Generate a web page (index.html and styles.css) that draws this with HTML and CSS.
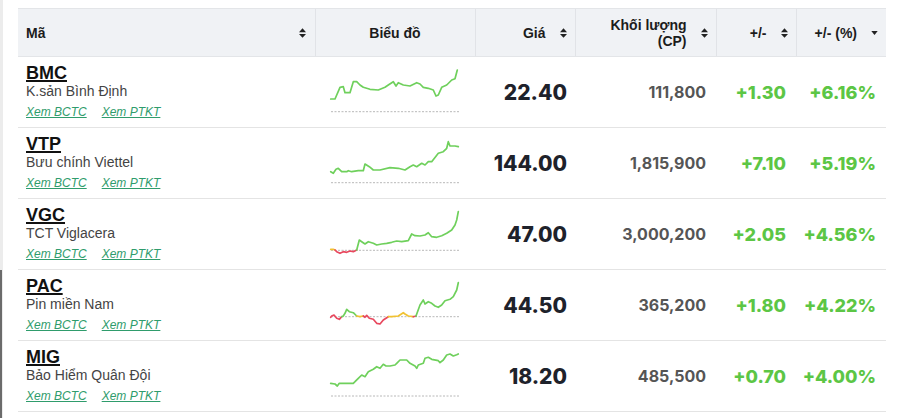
FILE: index.html
```html
<!DOCTYPE html>
<html lang="vi">
<head>
    <meta charset="UTF-8">
    <meta name="viewport" content="width=device-width, initial-scale=1.0">
    <title>Cổ phiếu tăng giá</title>
    <link rel="stylesheet" href="styles.css">
</head>
<body>
    <div class="edge"></div>
    <table class="stocks">
        <colgroup>
            <col class="c-code">
            <col class="c-chart">
            <col class="c-price">
            <col class="c-vol">
            <col class="c-chg">
            <col class="c-pct">
        </colgroup>
        <thead>
            <tr>
                <th><div class="th-in between">Mã <svg class="sort" viewBox="0 0 8 11"><path d="M0 4.5L4 0L8 4.5Z M0 6.5L4 11L8 6.5Z"/></svg></div></th>
                <th><div class="th-in center">Biểu đồ</div></th>
                <th><div class="th-in end">Giá <svg class="sort" viewBox="0 0 8 11"><path d="M0 4.5L4 0L8 4.5Z M0 6.5L4 11L8 6.5Z"/></svg></div></th>
                <th><div class="th-in end"><span class="two">Khối lượng<br>(CP)</span> <svg class="sort" viewBox="0 0 8 11"><path d="M0 4.5L4 0L8 4.5Z M0 6.5L4 11L8 6.5Z"/></svg></div></th>
                <th><div class="th-in end">+/- <svg class="sort" viewBox="0 0 8 11"><path d="M0 4.5L4 0L8 4.5Z M0 6.5L4 11L8 6.5Z"/></svg></div></th>
                <th><div class="th-in end">+/- (%) <svg class="caret" viewBox="0 0 8 5"><path d="M0 0L8 0L4 5Z"/></svg></div></th>
            </tr>
        </thead>
        <tbody>
            <tr>
                <td class="code">
                    <a class="ticker" href="#">BMC</a>
                    <div class="name">K.sản Bình Định</div>
                    <div class="links"><a href="#">Xem BCTC</a><a href="#">Xem PTKT</a></div>
                </td>
                <td class="chart">
                    <svg class="spark" viewBox="0 0 134 48">
                        <line class="base" x1="3" y1="45.7" x2="132" y2="45.7"/>
                        <polyline class="up" points="2.7,33 7,33 12,21.3 15.3,20.7 17,26.7 22,26.7 25.3,15.7 28.7,15.7 32,19 35.3,21.3 42,23.3 50.3,24 57,21.3 60.3,19 65.3,15.7 68,20 70.3,16.7 75.3,19 82,20 88.7,16.7 92,18 95.3,21.3 100.3,22.3 105.3,24 108,30 110.3,29 113.7,21.3 118.7,19 123.7,14 127,12.7 129.3,4"/>
                    </svg>
                </td>
                <td class="price">22.40</td>
                <td class="vol">111,800</td>
                <td class="chg">+1.30</td>
                <td class="chg">+6.16%</td>
            </tr>
            <tr>
                <td class="code">
                    <a class="ticker" href="#">VTP</a>
                    <div class="name">Bưu chính Viettel</div>
                    <div class="links"><a href="#">Xem BCTC</a><a href="#">Xem PTKT</a></div>
                </td>
                <td class="chart">
                    <svg class="spark" viewBox="0 0 134 48">
                        <line class="base" x1="3" y1="45.7" x2="132" y2="45.7"/>
                        <polyline class="up" points="2.7,34.7 5.3,36.3 8,32.3 10.3,31.3 13.7,34.7 18.7,34.7 20.3,33.7 23.7,34.7 30.3,33.7 35.3,33.7 37,27 41.3,29.7 45.3,33 52,33 62,30.7 70.3,31.3 77,33 82,29.7 85.3,28 88.7,29.7 93.7,26.3 97,28 100.3,24.7 103.7,24.7 110.3,16.3 115.3,14.7 118.7,11.3 120.3,4.7 122,9 127,9 130.3,9.7"/>
                    </svg>
                </td>
                <td class="price">144.00</td>
                <td class="vol">1,815,900</td>
                <td class="chg">+7.10</td>
                <td class="chg">+5.19%</td>
            </tr>
            <tr>
                <td class="code">
                    <a class="ticker" href="#">VGC</a>
                    <div class="name">TCT Viglacera</div>
                    <div class="links"><a href="#">Xem BCTC</a><a href="#">Xem PTKT</a></div>
                </td>
                <td class="chart">
                    <svg class="spark" viewBox="0 0 134 48">
                        <line class="base" x1="3" y1="42.3" x2="132" y2="42.3"/>
                        <polyline class="flat" points="2.7,41.3 5.3,41.3 7,42"/>
                        <polyline class="down" points="7,42 8.7,43.7 12,45.3 15.3,43.7 18.7,44.3 22,43 25.3,43.7 28.7,42"/>
                        <polyline class="up" points="28.7,42 31.3,32 33.7,33.7 37,36 40.3,33.7 45.3,35.3 48.7,37 53.7,36 58.7,35.3 63.7,34.3 68.7,33 73.7,33.7 80.3,32.7 83.7,26 87,27.7 92,28 97,27 100.3,24.7 103.7,28.7 108.7,29.3 113.7,27.7 118.7,25.3 123.7,22 127,17 128.7,12 130.3,3.7"/>
                    </svg>
                </td>
                <td class="price">47.00</td>
                <td class="vol">3,000,200</td>
                <td class="chg">+2.05</td>
                <td class="chg">+4.56%</td>
            </tr>
            <tr>
                <td class="code">
                    <a class="ticker" href="#">PAC</a>
                    <div class="name">Pin miền Nam</div>
                    <div class="links"><a href="#">Xem BCTC</a><a href="#">Xem PTKT</a></div>
                </td>
                <td class="chart">
                    <svg class="spark" viewBox="0 0 134 48">
                        <line class="base" x1="3" y1="37.7" x2="132" y2="37.7"/>
                        <polyline class="down" points="2.7,38.3 3.7,37 6,36 8.7,39.3 11.3,40.3 13.7,37.7"/>
                        <polyline class="up" points="13.7,37.7 15.3,37 17,34.3 18.7,30.3 21.3,32.7 25.3,33.7 28.7,37"/>
                        <polyline class="flat" points="28.7,37 32,37.7 35.3,37"/>
                        <polyline class="down" points="35.3,37 37,38.3 38.7,36.3 41.3,39.3 45.3,40.3 48.7,44.3 52,45 55.3,41 60.3,37.7"/>
                        <polyline class="flat" points="60.3,37.7 63.7,37.7 70.3,37 75.3,33.7 77,35 80.3,37 85.3,37.7"/>
                        <polyline class="down" points="85.3,37.7 88,37"/>
                        <polyline class="up" points="88,37 92,26 95.3,21 97,25 100.3,22.7 103.7,24.3 107,27 110.3,28.3 113.7,26 117,21.7 122,20.3 125.3,17.7 128.7,11 130.3,3.7"/>
                    </svg>
                </td>
                <td class="price">44.50</td>
                <td class="vol">365,200</td>
                <td class="chg">+1.80</td>
                <td class="chg">+4.22%</td>
            </tr>
            <tr>
                <td class="code">
                    <a class="ticker" href="#">MIG</a>
                    <div class="name">Bảo Hiểm Quân Đội</div>
                    <div class="links"><a href="#">Xem BCTC</a><a href="#">Xem PTKT</a></div>
                </td>
                <td class="chart">
                    <svg class="spark" viewBox="0 0 134 48">
                        <line class="base" x1="3" y1="46" x2="132" y2="46"/>
                        <polyline class="up" points="2.7,33.3 7,34 9.3,36 11.3,33.3 25.3,33.3 27,31.7 30.3,28.3 33.7,25 37,26.7 40.3,21.7 45.3,19.3 48.7,16.7 52,18.3 55.3,14.3 58,16 62,16 67,15 68.7,13.3 72,10 78.7,10 82,13.3 87,16 88.7,18.3 90.3,15 95.3,13.3 97,8.3 100.3,7.3 103.7,9.3 110.3,10.7 112,12.7 115.3,10 118.7,5 122,4 125.3,6 128.7,4.7 130.3,4"/>
                    </svg>
                </td>
                <td class="price">18.20</td>
                <td class="vol">485,500</td>
                <td class="chg">+0.70</td>
                <td class="chg">+4.00%</td>
            </tr>
        </tbody>
    </table>
</body>
</html>
```

FILE: styles.css
```css
body {
    margin: 0;
    padding: 8px 13px 0 15px;
    border-left: 3px solid #ececec;
    background-color: #fff;
    font-family: "Liberation Sans", Arial, sans-serif;
    color: #222;
    min-height: 410px;
    overflow: hidden;
}
.edge {
    position: absolute;
    left: 0;
    top: 270px;
    width: 2px;
    height: 148px;
    background-color: #6b6b6b;
}
.stocks {
    width: 868px;
    border-collapse: collapse;
    table-layout: fixed;
}
.c-code { width: 297px; }
.c-chart { width: 160px; }
.c-price { width: 100px; }
.c-vol { width: 141px; }
.c-chg { width: 80px; }
.c-pct { width: 90px; }

thead th {
    height: 47px;
    padding: 0;
    background-color: #f0f2f5;
    border-top: 1px solid #e3e5e8;
    border-bottom: 1px solid #e3e5e8;
    border-left: 1px solid #e1e3e7;
    font-size: 14px;
    font-weight: bold;
    color: #1c1c1c;
}
thead th:first-child { border-left: none; }
.th-in {
    display: flex;
    align-items: center;
    gap: 14px;
    padding: 0 8px 0 8px;
}
.th-in.between { justify-content: space-between; padding-right: 9px; }
.th-in.center { justify-content: center; }
.th-in.end { justify-content: flex-end; }
.two {
    text-align: right;
    line-height: 16px;
}
.sort {
    width: 7px;
    height: 10px;
    fill: #222;
    flex: none;
}
.caret {
    width: 7px;
    height: 4px;
    fill: #222;
    flex: none;
}

tbody td {
    border-bottom: 1px solid #e4e4e4;
    padding: 0;
    vertical-align: middle;
}
td.code {
    padding: 7px 8px 7px 8px;
}
.ticker {
    display: block;
    width: max-content;
    font-size: 18px;
    line-height: 18px;
    font-weight: bold;
    color: #111;
    text-decoration: underline;
    text-decoration-thickness: 2px;
    text-underline-offset: 1px;
}
.name {
    font-size: 14px;
    line-height: 18px;
    color: #444;
}
.links {
    display: flex;
    gap: 15px;
    margin-top: 4px;
    line-height: 16px;
}
.links a {
    font-size: 12px;
    font-style: italic;
    color: #2f9c6c;
}

td.chart {
    text-align: center;
    vertical-align: top;
    padding-top: 9px;
}
.spark {
    width: 134px;
    height: 48px;
    display: block;
    margin: 0 auto;
    overflow: visible;
}
.spark polyline {
    fill: none;
    stroke-width: 1.7;
    stroke-linejoin: round;
    stroke-linecap: round;
}
.spark .up { stroke: #6fd05c; }
.spark .down { stroke: #e8485e; }
.spark .flat { stroke: #f1c232; }
.spark .base {
    stroke: #b8b8b8;
    stroke-width: 1;
    stroke-dasharray: 2 1.5;
}

td.price, td.vol, td.chg {
    font-family: Inter, "Open Sans", sans-serif;
    text-align: right;
}
td.price {
    font-size: 21px;
    font-weight: 800;
    color: #1e222b;
    padding-right: 8px;
}
td.vol {
    font-size: 16px;
    font-weight: 700;
    color: #555;
    padding-right: 10px;
}
td.chg {
    font-size: 18px;
    font-weight: 800;
    color: #5cc645;
    padding-right: 10px;
}
```
